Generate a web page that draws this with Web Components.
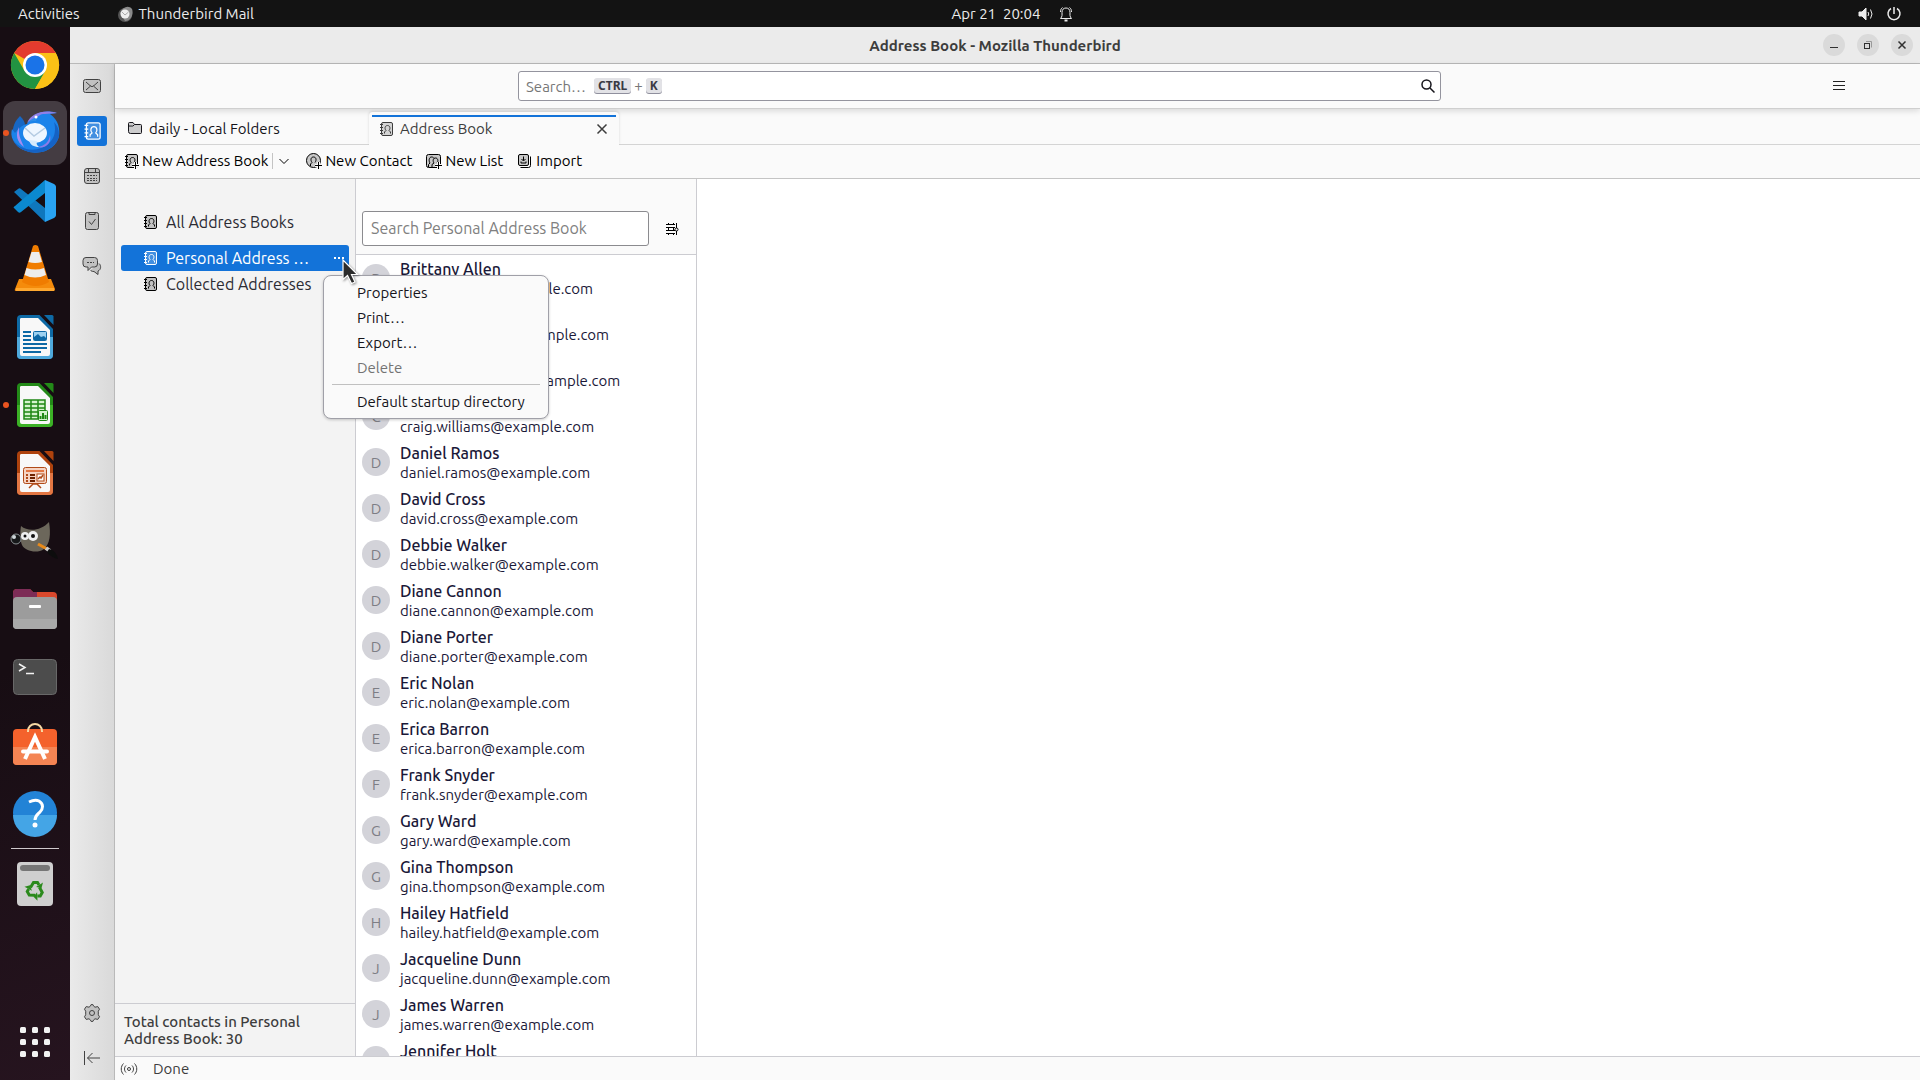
<!DOCTYPE html>
<html lang="en">
<head>
<meta charset="utf-8">
<title>Address Book - Mozilla Thunderbird</title>
<style>
  :root {
    --accent: #1373d9;
    --line: #ccccd1;
    --chrome: #fafafa;
    --text: #15141a;
    --muted: #3d3d3d;
  }
  * { box-sizing: border-box; }
  html, body { margin: 0; height: 100%; }
  body {
    display: grid;
    grid-template: auto minmax(0, 1fr) / 70px minmax(0, 1fr);
    height: 100vh;
    overflow: hidden;
    font: 15px/17px Ubuntu, "Noto Sans", "Open Sans", sans-serif;
    color: var(--text);
    background: #1b1017;
  }
  top-panel { grid-column: 1 / -1; }
</style>
</head>
<body>
  <top-panel app="Thunderbird Mail" clock="Apr 21  20:04"></top-panel>
  <app-dock></app-dock>
  <mail-window heading="Address Book - Mozilla Thunderbird">
    <spaces-bar slot="spaces"></spaces-bar>
    <global-search slot="header"></global-search>
    <tab-strip slot="tabs">
      <tab-item icon="folder">daily - Local Folders</tab-item>
      <tab-item icon="book" active>Address Book</tab-item>
    </tab-strip>
    <book-toolbar slot="toolbar"></book-toolbar>
    <book-pane slot="main">
      <book-row name="All Address Books" top></book-row>
      <book-row name="Personal Address Book" selected>
        <context-menu></context-menu>
        <mouse-pointer></mouse-pointer>
      </book-row>
      <book-row name="Collected Addresses"></book-row>
      <span slot="count">Total contacts in Personal Address Book: 30</span>
    </book-pane>
    <contact-list slot="main"></contact-list>
    <status-bar slot="status">Done</status-bar>
  </mail-window>

<script>
const BASE = '*, *::before { box-sizing: border-box; } button, input { font: inherit; color: inherit; } button { border: 0; padding: 0; background: none; }';

/* 16px line icons. .f is the soft fill behind the stroke */
const BOOK = '<rect class="f" x="3.500" y="1.500" width="11" height="13" rx="1.500"/><path d="M2 3.500h3M2 6.500h3M2 9.500h3M2 12.500h3"/>';
const ICONS = {
  mail: '<rect class="f" x="-.5" y="1.500" width="17" height="13" rx="2"/><path d="M2 4l4.500 4M14 4l-4.500 4M2 12l4-3.500M14 12l-4-3.500M6 7.500q2 2.500 4 0"/>',
  book: BOOK + '<path d="M6.500 12.500V11l1.500-1.500c-1.500-1.500-1.300-5 1.500-5s3 3.500 1.500 5l1.500 1.500v1.500"/>',
  calendar: '<rect class="f" x=".5" y=".5" width="15" height="15" rx="2.500"/><path d="M.5 4.500h15M4.500 1v3M11.500 1v3"/><path d="M3 7.500h10M3 10.500h10M3 12.500h10" stroke-dasharray="2 1"/>',
  tasks: '<rect class="f" x="1.500" y="-.5" width="13" height="17" rx="2"/><path d="M5 -.5v2h6v-2M5 8.500l2.500 3 4-5.500"/>',
  chat: '<path class="f" d="M15 5.500c2.500 2 2 6.500-1 7.500v3.500l-4-3c-2 0-3-.5-3.500-1.500"/><path class="f" d="M2-.5h8.500a3 3 0 0 1 3 3v3.500a3 3 0 0 1-3 3H7.500l-3.500 3.500v-3.500H2a3 3 0 0 1-3-3V2.500a3 3 0 0 1 3-3z"/><path d="M3 4.500h7" stroke-dasharray="2 1"/>',
  gear: '<path class="f" d="M6.500 1l.7-1.500h1.600l.7 1.500 1.500 1.200 2.800-.6 1.700 2.600-1.200 2v3.600l1.200 2-1.700 2.600-2.800-.6L9.500 15l-.7 1.500H7.200L6.500 15 5 13.800l-2.800.6-1.700-2.600 1.200-2V6.200l-1.200-2 1.700-2.600 2.800.6z"/><circle cx="8" cy="8" r="2.500"/>',
  collapse: '<path d="M.5 1v14M16 8H3.500M8.500 3l-5 5 5 5"/>',
  folder: '<path class="f" d="M1.500 11.500v-8a1 1 0 0 1 1-1h3.500l1.500 2h6a1 1 0 0 1 1 1v7a1 1 0 0 1-1 1h-10a2 2 0 0 1-2-2zM1.500 6h4.500l1.500-1.500"/>',
  newbook: BOOK + '<path d="M6.500 12.500V11l1.500-1.500c-1.500-1.500-1.300-5 1.500-5s3 3 1.500 5"/><path class="halo" d="M12.500 9v7M9 12.500h7"/><path d="M12.500 9v7M9 12.500h7"/>',
  newcontact: '<circle class="f" cx="7.500" cy="7.500" r="7"/><path d="M4.500 13v-2l1.500-1.500c-1.800-2.500-1.200-5.500 1.500-5.500s3.300 3 1.500 5.500"/><path class="halo" d="M12.500 9v7M9 12.500h7"/><path d="M12.500 9v7M9 12.500h7"/>',
  newlist: '<rect class="f" x=".5" y="1.500" width="14" height="13" rx="2"/><path d="M2.500 14v-2.500l1.500-1.500c-1.500-2-1-6 1.500-6 1.500 0 2 .5 2.500 1.500M6 14v-2.500l2-1.500c-1.500-2-1-5 1.500-5s3 3 1.500 5"/><path class="halo" d="M12.500 9v7M9 12.500h7"/><path d="M12.500 9v7M9 12.500h7"/>',
  import: '<rect class="f" x="1.500" y="1.500" width="10" height="11" rx="1.500"/><path d="M13.500 3.500v9a2 2 0 0 1-2 2h-8M6.500 3.500v4M4.500 6l2 2 2-2M4 8.500v1.500h5v-1.500"/>',
  chevron: '<path d="M3.500 6l4.500 4.500L12.500 6"/>',
  close: '<path d="M3.500 3.500l9 9M12.500 3.500l-9 9" stroke-width="1.500"/>',
  search: '<circle cx="6.500" cy="6.500" r="4.500" stroke-width="1.500"/><path d="M10 10l4.500 4.500" stroke-width="1.500"/>',
  menu: '<path d="M2 3.500h12M2 7.500h12M2 11.500h12"/>',
  layout: '<path d="M2 3.500h9M2 6.500h9M2 9.500h9M2 12.500h9M4.500 2v1M4.500 6v4M4.500 13v1M9.500 2v1M9.500 6v4M9.500 13v1M12.500 2v5M12.500 10v4"/><circle cx="12.500" cy="8.500" r="1.500"/>',
  dots: '<path d="M3 8h2M7 8h2M11 8h2" stroke-width="2"/>',
  signal: '<circle cx="8" cy="8" r="1.500"/><path d="M5 4.500c-2 2-2 5 0 7M11 4.500c2 2 2 5 0 7M2.500 2.500c-3 3-3 8 0 11M13.500 2.500c3 3 3 8 0 11"/>',
  bell: '<path d="M2.500 12.500c2-2 1.500-4 1.500-6 0-3 1.500-4.500 4-4.500s4 1.500 4 4.500c0 2-.5 4 1.500 6zM2.500 6c0-2 .5-3.500 2-4.500M13.500 6c0-2-.5-3.500-2-4.500"/><path d="M6.500 14.500h3" stroke-width="2"/>',
  sound: '<path d="M1 6h3l4-4v12L4 10H1z" fill="currentColor"/><path d="M10 6q1.500 2 0 4M12.500 3.500q3 4.500 0 9"/>',
  power: '<path d="M5 2.500a6 6 0 1 0 6 0M8 1v7" stroke-width="1.500"/>'
};

class UiIcon extends HTMLElement {
  constructor() {
    super();
    this.attachShadow({ mode: 'open' }).innerHTML = `
      <style>
        :host { display: inline-flex; flex: none; width: 16px; height: 16px; }
        svg { width: 100%; height: 100%; overflow: visible; fill: none; stroke: currentColor; stroke-width: 1; }
        .f { fill: currentColor; fill-opacity: .2; }
        .halo { stroke: var(--chrome); stroke-width: 3; }
      </style>
      <svg viewBox="0 0 16 16" aria-hidden="true">${ICONS[this.getAttribute('name')] || ''}</svg>`;
  }
}
customElements.define('ui-icon', UiIcon);

class TopPanel extends HTMLElement {
  constructor() {
    super();
    this.attachShadow({ mode: 'open' }).innerHTML = `
      <style>${BASE}
        :host { display: grid; grid-template-columns: 1fr auto 1fr; align-items: center; height: 27px; padding: 0 18px; background: #131313; color: #ececec; }
        div { display: flex; align-items: center; }
        .left { gap: 37px; }
        .app { display: flex; align-items: center; gap: 6px; }
        .clock { gap: 18px; white-space: pre; padding-left: 106px; }
        .tray { justify-content: flex-end; gap: 12px; }
      </style>
      <div class="left">
        <button>Activities</button>
        <button class="app">
          <svg width="16" height="16" viewBox="0 0 16 16"><circle cx="8" cy="9" r="7" fill="#555"/><path d="M3 7C6 0 12-1 15 3c2 5-1 12-7 12" fill="#8a8a8a"/><circle cx="8" cy="8" r="4.500" fill="#eee"/><path d="M5 6l3 3 3.500-3" fill="none" stroke="#aaa"/></svg>
          ${this.getAttribute('app')}
        </button>
      </div>
      <div class="clock"><time>${this.getAttribute('clock')}</time><ui-icon name="bell"></ui-icon></div>
      <div class="tray"><ui-icon name="sound"></ui-icon><ui-icon name="power"></ui-icon></div>`;
  }
}
customElements.define('top-panel', TopPanel);

/* LibreOffice page shape, shared by three launchers */
const sheet = (dark, light, art) => `
  <path d="M10 2h18.500L42 16v26a4 4 0 0 1-4 4H10a4 4 0 0 1-4-4V6a4 4 0 0 1 4-4z" fill="${dark}"/>
  <path d="M6 24h36v18a4 4 0 0 1-4 4H10a4 4 0 0 1-4-4z" fill="${light}"/>
  <path d="M10 5h17l12 12v24a2 2 0 0 1-2 2H11a2 2 0 0 1-2-2V6.500A1.500 1.500 0 0 1 10 5z" fill="#f8f8f8"/>
  <path d="M33 2h8a1.500 1.500 0 0 1 1.500 1.500V12z" fill="${dark}"/>${art}`;

const APPS = [
  { name: 'Google Chrome', art: '<circle cx="24" cy="24" r="24" fill="#fbc116"/><path d="M24 24L3.200 12A24 24 0 0 1 44.800 12z" fill="#e33b2e"/><path d="M3.200 12A24 24 0 0 0 24 48l10.400-18L24 24 13.600 30z" fill="#229342"/><path d="M24 12h20.800A24 24 0 0 1 24 48l10.400-18z" fill="#fbc116"/><circle cx="24" cy="24" r="12" fill="#fff"/><circle cx="24" cy="24" r="9.500" fill="#1a73e8"/>' },
  { name: 'Thunderbird Mail', running: true, active: true, art: '<path d="M9 7c3 3 5 6 5 9l-6 8-6 2c-1-8 2-14 7-19z" fill="#1767c4"/><path d="M1 20l3 4c3-4 7-8 12-9C20 5 33 0 46 4l-7 1c9 6 10 16 9 22a24 20 0 0 1-46 4C0 27 0 24 1 20z" fill="#1b83ea"/><path d="M2 31c7 10 25 15 38 1 4-5 5-12 3-19 5 5 5 11 5 14a24 20 0 0 1-46 4z" fill="#1562c4"/><path d="M16 14C20 4 33 0 46 4L34 5c-5 0-7 2-9 5-3 0-6 1-9 4z" fill="#8e7fe8"/><path d="M21 10l5-2-1 4c-3 0-6 0-8 2z" fill="#2c8eea"/><path d="M8 18c-4 8-2 15 5 20-2-5-6-11-5-20z" fill="#a48cf0"/><path d="M26 38c8-1 12-5 13-12 2 8-4 14-13 12z" fill="#8b7be8"/><ellipse cx="24" cy="24" rx="12" ry="10" fill="#eef6ff"/><path d="M18 31c1 5 5 7 10 7-2-2-3-3-2-6z" fill="#d6ebfc"/><path d="M14 19l9 8 11-8" fill="none" stroke="#b4cbe2" stroke-width="1.500"/><circle cx="25" cy="8" r="1.500" fill="#fff"/>' },
  { name: 'Visual Studio Code', art: '<path d="M3 15l4-3c1-1 2-1 3 0l24 19v14z" fill="#0f77bd"/><path d="M3 31l4 4c1 1 2 1 3 0L34 16V3L4 29c-1 1-2 1-1 2z" fill="#0b89d0"/><path d="M34 3l9 4c1.500 1 2 2 2 3v28c0 1-.5 2-2 3l-9 4z" fill="#29a3f2"/>' },
  { name: 'VLC', art: '<path d="M8 34h32l4 10c0 2-1 2-2 2H6c-1 0-3 0-2-2z" fill="#f58b0b"/><path d="M5 43h38v3H5z" fill="#ffa930"/><path d="M22 1q2-2 5 0l11 36q-13 8-27 0z" fill="#f07c00"/><path d="M20.500 7h7.500l3 10q-7 2-13.500 0z" fill="#ededed"/><path d="M15.500 23q9 3 17.500 0l2 7q-11 5-21.500 0z" fill="#ededed"/>' },
  { name: 'LibreOffice Writer', art: sheet('#0e6aa6', '#4fa9dc', '<path d="M12 19h8M12 23h8M12 27h8M12 31h24M12 35h24M12 39h18" stroke="#0d69a5" stroke-width="2"/><rect x="22.500" y="18.500" width="13" height="9" rx="1" fill="#9cd1f0" stroke="#0d69a5"/><path d="M23 27v-3l4-3 3 3 3-1 2 2v2z" fill="#0d69a5"/>') },
  { name: 'LibreOffice Calc', running: true, art: sheet('#238a18', '#3cb126', '<path d="M13 19h21v19H13zM13 23h21M13 27h21M13 31h21M13 35h21M20 19v19M27 19v19" fill="#d5f3cd" stroke="#1f8714" stroke-width="1.500"/><rect x="27.500" y="29.500" width="9" height="10" rx="1" fill="#d5f3cd" stroke="#1f8714"/><path d="M29.500 38v-3M32 38v-6M34.500 38v-4" stroke="#1f8714" stroke-width="2"/>') },
  { name: 'LibreOffice Impress', art: sheet('#ae420d', '#e27643', '<rect x="12.500" y="18.500" width="23" height="16" rx="2" fill="#f6d4c3" stroke="#b04a18"/><path d="M15 22h18" stroke="#e27643" stroke-width="2"/><path d="M19 26h5M19 29h5M19 32h5" stroke="#6d2200" stroke-width="2"/><path d="M15 26h2M15 29h2M15 32h2" stroke="#b04a18" stroke-width="2"/><rect x="26" y="25" width="7" height="7" fill="#fff" stroke="#b04a18"/><path d="M27 30l2-2 1 1 2-3M18 39l4-4h4l4 4" fill="none" stroke="#b04a18" stroke-width="1.500"/>') },
  { name: 'GIMP', art: '<path d="M10 8c7 6 20 5 28-4 2 12 1 22-5 27-7 5-19 2-22-4C9 22 9 14 10 8z" transform="translate(0 1)" fill="#6c675b"/><circle cx="5" cy="22" r="5" fill="#17181a" stroke="#8b9194"/><circle cx="3" cy="20" r="2" fill="#cfd6da"/><circle cx="14" cy="19" r="4" fill="#efefef"/><circle cx="22" cy="19" r="5" fill="#efefef"/><circle cx="14" cy="19" r="1.500" fill="#111"/><circle cx="22" cy="19" r="2" fill="#111"/><path d="M27 27l9 5" stroke="#e88a1a" stroke-width="3"/><path d="M35 31l4 3" stroke="#ccc" stroke-width="4"/><path d="M38 32c5 1 8 5 9 10-5-1-9-4-11-7z" fill="#0d0d0d"/>' },
  { name: 'Files', art: '<path d="M2 8a4 4 0 0 1 4-4h13l3 3h20a4 4 0 0 1 4 4v6H2z" fill="#d9482c"/><path d="M2 8a4 4 0 0 1 4-4h13l3 3h4v10H2z" fill="#7d2c56"/><rect x="2" y="12" width="44" height="32" rx="4" fill="#9c9c9c"/><path d="M2 34h44v6a4 4 0 0 1-4 4H6a4 4 0 0 1-4-4z" fill="#a9a9a9"/><rect x="18" y="20" width="12" height="3" rx="1" fill="#fff"/>' },
  { name: 'Terminal', art: '<rect x="2.500" y="6.500" width="43" height="35" rx="4" fill="#4c4c4c" stroke="#686868"/><path d="M8 11l6 3.500L8 18M15 20.500h8" fill="none" stroke="#f2f2f2" stroke-width="1.500"/>' },
  { name: 'Ubuntu Software', art: '<rect x="2" y="8" width="44" height="36" rx="4" fill="#f4622c"/><path d="M2 26h44v14a4 4 0 0 1-4 4H6a4 4 0 0 1-4-4z" fill="#f48453"/><path d="M17 11v-1a7 7 0 0 1 14 0v1" fill="none" stroke="#f7d9a4" stroke-width="2"/><path d="M14 38l10-22 10 22" fill="none" stroke="#fff" stroke-width="4"/><path d="M12 30.500h24" stroke="#fff" stroke-width="4" stroke-linecap="round"/>' },
  { name: 'Help', art: '<circle cx="24" cy="24" r="22" fill="#2283d6"/><path d="M2 26a22 22 0 0 0 44 0z" fill="#44a5e6"/><path d="M18 13q6-3 10-1c5 3 4 8 1 11s-5 4-5 8" fill="none" stroke="#fff" stroke-width="3"/><circle cx="24" cy="36" r="2.500" fill="#fff"/>' }
];

const ARROW = '<path d="M19.500 27.500l3-5h4l1.500 2.500" fill="none" stroke="#2b8a1c" stroke-width="3"/><path d="M25 27l5.500 1 1.500-5.500z" fill="#2b8a1c"/>';
const TRASH = { name: 'Trash', art: `<rect x="6" y="2" width="36" height="44" rx="4" fill="#cfcfcf"/><rect x="9" y="5" width="30" height="6" rx="3" fill="#767676"/>${[0, 120, 240].map(a => `<g transform="rotate(${a} 24 30)">${ARROW}</g>`).join('')}` };
const GRID = { name: 'Show Applications', art: [9, 21, 33].map(y => [9, 21, 33].map(x => `<rect x="${x}" y="${y}" width="6" height="6" rx="1.500" fill="#f2f2f2"/>`).join('')).join('') };

class AppDock extends HTMLElement {
  constructor() {
    super();
    const tile = a => `
      <button aria-label="${a.name}" class="${a.active ? 'active' : ''} ${a.running ? 'running' : ''}">
        <svg width="48" height="48" viewBox="0 0 48 48">${a.art}</svg>
      </button>`;
    this.attachShadow({ mode: 'open' }).innerHTML = `
      <style>${BASE}
        :host { display: flex; min-height: 0; }
        nav { flex: 1; display: flex; flex-direction: column; align-items: center; padding: 4px 0; background: linear-gradient(160deg, #170d13 60%, #26141f); }
        button { flex: none; display: grid; place-items: center; position: relative; width: 64px; height: 64px; margin: 2px 0; border-radius: 12px; }
        svg { overflow: visible; }
        .active { background: #443c42; }
        .running::before { content: ""; position: absolute; left: 0; width: 6px; height: 6px; border-radius: 50%; background: #e95420; }
        hr { width: 48px; height: 1px; margin: 1px 0; border: 0; background: #cfcacd; }
        button:last-child { margin-top: auto; }
      </style>
      <nav aria-label="Dock">${APPS.map(tile).join('')}<hr>${tile(TRASH)}${tile(GRID)}</nav>`;
  }
}
customElements.define('app-dock', AppDock);

class MailWindow extends HTMLElement {
  constructor() {
    super();
    this.attachShadow({ mode: 'open' }).innerHTML = `
      <style>${BASE}
        :host { display: grid; grid-template: auto minmax(0, 1fr) / auto minmax(0, 1fr); min-height: 0; background: var(--chrome); }
        header { grid-column: 1 / -1; display: grid; grid-template-columns: 1fr auto 1fr; align-items: center; height: 37px; padding: 0 7px; background: #ebebeb; border-bottom: 1px solid #b9b9b9; }
        h1 { grid-column: 2; margin: 0; font-size: 15px; font-weight: 700; color: var(--muted); }
        .controls { display: flex; justify-content: flex-end; gap: 12px; color: #303030; }
        .controls button { display: grid; place-items: center; width: 22px; height: 22px; border-radius: 50%; background: #dadada; }
        .body { display: flex; flex-direction: column; min-height: 0; }
        main { flex: 1; display: flex; min-height: 0; background: #fff; }
      </style>
      <header>
        <h1>${this.getAttribute('heading')}</h1>
        <div class="controls">
          <button aria-label="Minimize"><svg width="10" height="10"><path d="M1 7.500h8" stroke="currentColor"/></svg></button>
          <button aria-label="Restore"><svg width="10" height="10" fill="none" stroke="currentColor"><rect x="1.500" y="3.500" width="5" height="5"/><path d="M3 1.500h5.500v6" stroke="#999"/></svg></button>
          <button aria-label="Close"><svg width="10" height="10"><path d="M1.500 1.500l7 7M8.500 1.500l-7 7" stroke="currentColor" stroke-width="1.500"/></svg></button>
        </div>
      </header>
      <slot name="spaces"></slot>
      <div class="body">
        <slot name="header"></slot>
        <slot name="tabs"></slot>
        <slot name="toolbar"></slot>
        <main><slot name="main"></slot></main>
        <slot name="status"></slot>
      </div>`;
  }
}
customElements.define('mail-window', MailWindow);

class SpacesBar extends HTMLElement {
  constructor() {
    super();
    const button = ([icon, label, on]) => `<button aria-label="${label}" class="${on ? 'on' : ''}"><ui-icon name="${icon}"></ui-icon></button>`;
    this.attachShadow({ mode: 'open' }).innerHTML = `
      <style>${BASE}
        :host { display: flex; min-height: 0; }
        nav { display: flex; flex-direction: column; gap: 15px; padding: 7px; border-right: 1px solid #b9b9b9; background: linear-gradient(90deg, #eaeaea, #d9d9d9); color: #424242; }
        button { display: grid; place-items: center; width: 30px; height: 30px; border-radius: 3px; }
        .on { background: var(--accent); color: #fff; }
        .on ui-icon { width: 20px; height: 20px; }
        .push { flex: 1; }
      </style>
      <nav aria-label="Spaces">
        ${[['mail', 'Mail'], ['book', 'Address Book', true], ['calendar', 'Calendar'], ['tasks', 'Tasks'], ['chat', 'Chat']].map(button).join('')}
        <span class="push"></span>
        ${[['gear', 'Settings'], ['collapse', 'Collapse']].map(button).join('')}
      </nav>`;
  }
}
customElements.define('spaces-bar', SpacesBar);

class GlobalSearch extends HTMLElement {
  constructor() {
    super();
    this.attachShadow({ mode: 'open' }).innerHTML = `
      <style>${BASE}
        :host { display: grid; grid-template-columns: 403fr 923fr 479fr; align-items: center; height: 45px; border-bottom: 1px solid #cfcfcf; position: relative; box-shadow: 0 2px 6px #0002; }
        form { grid-column: 2; display: grid; align-items: center; height: 30px; border: 1px solid #94949e; border-radius: 3px; background: #fff; }
        input, .hint, form button { grid-area: 1 / 1; }
        input { width: 100%; height: 28px; padding: 0 7px; border: 0; outline: 0; background: none; }
        input::placeholder { color: #777; opacity: 1; }
        .hint { display: flex; align-items: center; gap: 3px; padding: 0 0 1px 75px; color: #777; pointer-events: none; }
        kbd { padding: 0 4px; border-radius: 3px; background: #e2e2e6; box-shadow: 0 1px 0 #8f8f9d; font: 700 12px/15px "Noto Sans", sans-serif; color: #3a3a44; }
        form button { justify-self: end; display: flex; padding: 0 4px; }
        .app-menu { justify-self: end; display: flex; padding: 7px; margin-right: 66px; color: #222; }
      </style>
      <form role="search">
        <input type="text" placeholder="Search…" aria-label="Search">
        <span class="hint"><kbd>CTRL</kbd>+<kbd>K</kbd></span>
        <button type="button" aria-label="Search"><ui-icon name="search"></ui-icon></button>
      </form>
      <button class="app-menu" aria-label="Menu"><ui-icon name="menu"></ui-icon></button>`;
  }
}
customElements.define('global-search', GlobalSearch);

class TabStrip extends HTMLElement {
  constructor() {
    super();
    this.attachShadow({ mode: 'open' }).innerHTML = `
      <style>
        :host { display: flex; gap: 1px; height: 36px; padding: 3px 3px 0; border-bottom: 1px solid #d4d4d4; box-sizing: border-box; }
      </style>
      <slot></slot>`;
  }
}
customElements.define('tab-strip', TabStrip);

class TabItem extends HTMLElement {
  constructor() {
    super();
    const active = this.hasAttribute('active');
    this.attachShadow({ mode: 'open' }).innerHTML = `
      <style>${BASE}
        :host { display: flex; align-items: center; width: 250px; height: 32px; padding: 0 9px; border-radius: 4px 4px 0 0; box-sizing: border-box; }
        :host([active]) { position: relative; height: 33px; background: var(--chrome); box-shadow: 0 -1px 3px #0002; color: var(--muted); clip-path: inset(-4px -4px 0); }
        :host([active])::before { content: ""; position: absolute; inset: 3px 3px auto; height: 2px; background: var(--accent); }
        .tab { flex: 1; display: flex; align-items: center; gap: 6px; padding: 0; text-align: left; }
        .close { display: flex; }
      </style>
      <button class="tab" role="tab" aria-selected="${active}"><ui-icon name="${this.getAttribute('icon')}"></ui-icon><slot></slot></button>
      ${active ? '<button class="close" aria-label="Close tab"><ui-icon name="close"></ui-icon></button>' : ''}`;
  }
}
customElements.define('tab-item', TabItem);

class BookToolbar extends HTMLElement {
  constructor() {
    super();
    this.attachShadow({ mode: 'open' }).innerHTML = `
      <style>${BASE}
        :host { display: flex; align-items: center; gap: 14px; height: 34px; padding: 0 8px 2px; border-bottom: 1px solid #c4c4c4; box-sizing: border-box; color: #000; }
        button, .split { display: flex; align-items: center; gap: 3px; white-space: nowrap; }
        .drop { margin-left: 1px; padding-left: 3px; border-left: 1px solid #c4c4c4; }
      </style>
      <div class="split">
        <button><ui-icon name="newbook"></ui-icon>New Address Book</button>
        <button class="drop" aria-label="More"><ui-icon name="chevron"></ui-icon></button>
      </div>
      <button><ui-icon name="newcontact"></ui-icon>New Contact</button>
      <button><ui-icon name="newlist"></ui-icon>New List</button>
      <button><ui-icon name="import"></ui-icon>Import</button>`;
  }
}
customElements.define('book-toolbar', BookToolbar);

class BookPane extends HTMLElement {
  constructor() {
    super();
    this.attachShadow({ mode: 'open' }).innerHTML = `
      <style>
        :host { display: flex; flex: none; flex-direction: column; width: 241px; border-right: 1px solid var(--line); background: #f3f3f3; box-sizing: border-box; }
        nav { flex: 1; padding: 30px 6px 0; }
        footer { padding: 9px; border-top: 1px solid var(--line); font-weight: 500; color: var(--muted); }
      </style>
      <nav aria-label="Address books"><slot></slot></nav>
      <footer><slot name="count"></slot></footer>`;
  }
}
customElements.define('book-pane', BookPane);

class BookRow extends HTMLElement {
  constructor() {
    super();
    this.attachShadow({ mode: 'open' }).innerHTML = `
      <style>${BASE}
        :host { display: flex; align-items: center; position: relative; height: 26px; padding: 0 2px 0 21px; border-radius: 3px; font-size: 16px; color: #2c2c33; box-sizing: border-box; }
        :host([top]) { margin-bottom: 10px; }
        :host([selected]) { background: var(--accent); color: #fff; }
        .name { flex: 1; display: flex; align-items: center; gap: 8px; min-width: 0; text-align: left; }
        .name span { overflow: hidden; text-overflow: ellipsis; white-space: nowrap; }
        .name ui-icon { color: #000; }
        :host([selected]) ui-icon { color: #fff; }
        .more { display: flex; padding-left: 12px; }
      </style>
      <button class="name"><ui-icon name="book"></ui-icon><span>${this.getAttribute('name')}</span></button>
      ${this.hasAttribute('selected') ? '<button class="more" aria-label="More"><ui-icon name="dots"></ui-icon></button>' : ''}
      <slot></slot>`;
  }
}
customElements.define('book-row', BookRow);

class ContextMenu extends HTMLElement {
  constructor() {
    super();
    this.attachShadow({ mode: 'open' }).innerHTML = `
      <style>${BASE}
        :host { position: absolute; z-index: 10; top: 30px; left: 202px; display: block; width: 226px; padding: 4px 0; border: 1px solid #a0a0a8; border-radius: 8px; background: var(--chrome); box-shadow: 0 1px 3px #0003; font-size: 15px; color: var(--text); box-sizing: border-box; }
        button { display: block; width: 100%; height: 25px; padding: 0 0 0 33px; text-align: left; }
        button:disabled { color: #737373; }
        hr { height: 1px; margin: 4px 8px; border: 0; background: #c0c0c0; }
      </style>
      <div role="menu">
        <button role="menuitem">Properties</button>
        <button role="menuitem">Print…</button>
        <button role="menuitem">Export…</button>
        <button role="menuitem" disabled>Delete</button>
        <hr>
        <button role="menuitem">Default startup directory</button>
      </div>`;
  }
}
customElements.define('context-menu', ContextMenu);

class MousePointer extends HTMLElement {
  constructor() {
    super();
    this.attachShadow({ mode: 'open' }).innerHTML = `
      <style>:host { position: absolute; z-index: 11; top: 14px; left: 221px; pointer-events: none; filter: drop-shadow(1px 1px 1px #0006); } svg { display: block; }</style>
      <svg width="18" height="26"><path d="M1 1v19.500l4.500-4 4 8 3.500-1.500-3.500-7.500h6z" fill="#2b2b2b" stroke="#fff" stroke-width="1.200"/></svg>`;
  }
}
customElements.define('mouse-pointer', MousePointer);

const CONTACTS = [
  'Brittany Allen', 'Catherine Perez', 'Christopher Reyes', 'Craig Williams',
  'Daniel Ramos', 'David Cross', 'Debbie Walker', 'Diane Cannon', 'Diane Porter',
  'Eric Nolan', 'Erica Barron', 'Frank Snyder', 'Gary Ward', 'Gina Thompson',
  'Hailey Hatfield', 'Jacqueline Dunn', 'James Warren', 'Jennifer Holt'
].map(name => ({ name, email: name.toLowerCase().replace(' ', '.') + '@example.com' }));

class ContactList extends HTMLElement {
  constructor() {
    super();
    this.attachShadow({ mode: 'open' }).innerHTML = `
      <style>${BASE}
        :host { display: flex; flex: none; flex-direction: column; width: 341px; border-right: 1px solid var(--line); box-sizing: border-box; }
        header { display: flex; align-items: center; gap: 15px; padding: 32px 16px 8px 6px; border-bottom: 1px solid var(--line); background: var(--chrome); }
        input { flex: 1; min-width: 0; height: 35px; padding: 0 8px 2px; border: 1px solid #8b8b8f; border-radius: 3px; background: #fff; font-size: 16px; outline: 0; }
        input::placeholder { color: #808080; opacity: 1; }
        header button { display: flex; color: #000; }
        ul { flex: 1; min-height: 0; margin: 0; padding: 0; overflow: hidden; list-style: none; color: #1a1838; }
        li { display: flex; align-items: center; gap: 10px; height: 46px; padding: 0 6px; line-height: 19px; }
        li div { padding-top: 2px; }
        .avatar { display: grid; place-items: center; width: 28px; height: 28px; border-radius: 50%; background: #d3d3d9; color: #7d7d84; }
        strong { display: block; font-size: 16px; font-weight: 500; }
      </style>
      <header>
        <input type="text" placeholder="Search Personal Address Book" aria-label="Search Personal Address Book">
        <button aria-label="List display options"><ui-icon name="layout"></ui-icon></button>
      </header>
      <ul>${CONTACTS.map(c => `
        <li>
          <span class="avatar" aria-hidden="true">${c.name[0]}</span>
          <div><strong>${c.name}</strong>${c.email}</div>
        </li>`).join('')}
      </ul>`;
  }
}
customElements.define('contact-list', ContactList);

class StatusBar extends HTMLElement {
  constructor() {
    super();
    this.attachShadow({ mode: 'open' }).innerHTML = `
      <style>
        :host { display: flex; align-items: center; gap: 16px; height: 24px; padding: 0 6px; border-top: 1px solid var(--line); color: var(--muted); box-sizing: border-box; }
      </style>
      <ui-icon name="signal"></ui-icon><slot></slot>`;
  }
}
customElements.define('status-bar', StatusBar);
</script>
</body>
</html>
